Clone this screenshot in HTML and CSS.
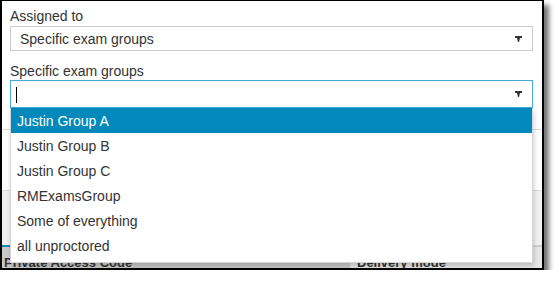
FILE: index.html
```html
<!DOCTYPE html>
<html>
<head>
<meta charset="utf-8">
<link rel="stylesheet" href="styles.css">
</head>
<body>
<div class="frame">
  <div class="form">
    <div class="field-label">Assigned to</div>
    <div class="select">
      <span class="select-text">Specific exam groups</span>
      <svg class="caret" width="7" height="6" viewBox="0 0 7 6"><polygon points="0,0 7,0 7,2 5,2 4,6 3,6 2,2 0,2" fill="#333"/></svg>
    </div>
    <div class="field-label second">Specific exam groups</div>
    <div class="combo">
      <div class="input">
        <span class="cursor"></span>
        <svg class="caret" width="7" height="6" viewBox="0 0 7 6"><polygon points="0,0 7,0 7,2 5,2 4,6 3,6 2,2 0,2" fill="#333"/></svg>
      </div>
      <ul class="menu">
        <li class="item active">Justin Group A</li>
        <li class="item">Justin Group B</li>
        <li class="item">Justin Group C</li>
        <li class="item">RMExamsGroup</li>
        <li class="item">Some of everything</li>
        <li class="item">all unproctored</li>
      </ul>
    </div>
  </div>
  <div class="row-white"></div>
  <div class="row-gray"></div>
  <div class="tabs">
    <div class="tab tab-left">Private Access Code</div>
    <div class="tab tab-right">Delivery mode</div>
  </div>
</div>
</body>
</html>
```
FILE: styles.css
```css
html, body {
  margin: 0;
  padding: 0;
  background: #fff;
}
body {
  font-family: "Liberation Sans", Arial, sans-serif;
  font-size: 14px;
  line-height: 16px;
  color: #333;
}
.frame {
  width: 540px;
  height: 267px;
  border-style: solid;
  border-color: #000;
  border-width: 1px 2px 2px 2px;
  box-shadow: 5px 5px 5px rgba(0, 0, 0, 0.55);
  overflow: hidden;
  background: #fff;
  display: flex;
  flex-direction: column;
}
.form {
  padding: 7px 9px 21px 8px;
  border-bottom: 1px solid #dcdcdc;
  flex: none;
}
.field-label {
  height: 16px;
  margin-bottom: 2px;
}
.field-label.second {
  margin-top: 12px;
  margin-bottom: 1px;
}
.select {
  height: 23px;
  border: 1px solid #cccccc;
  display: flex;
  align-items: center;
  justify-content: space-between;
  padding: 0 10px 0 9px;
}
.select-text {
  padding-top: 1px;
}
.combo {
  position: relative;
}
.input {
  height: 26px;
  border: 1px solid #45acd9;
  display: flex;
  align-items: center;
  justify-content: space-between;
  padding: 0 10px 0 5px;
}
.cursor {
  width: 1px;
  height: 16px;
  background: #000;
  margin-top: 1px;
}
.caret {
  display: block;
}
.menu {
  position: absolute;
  left: 0;
  right: 0;
  top: 28px;
  margin: 0;
  padding: 0 0 4px 0;
  list-style: none;
  background: #fff;
  border: 1px solid #d6d6d6;
  border-top: none;
  box-shadow: 1px 3px 5px rgba(0, 0, 0, 0.18);
  z-index: 2;
}
.item {
  height: 16px;
  padding: 5px 6px 4px 6px;
  color: #333;
}
.item.active {
  background: #0089ba;
  color: #fff;
}
.row-white {
  height: 60px;
  flex: none;
  border-bottom: 1px solid #dcdcdc;
}
.row-gray {
  height: 54px;
  flex: none;
  background: #f0f0f0;
}
.tabs {
  display: flex;
  flex: none;
  height: 40px;
}
.tab {
  font-weight: bold;
  font-size: 13px;
  line-height: 16px;
  color: #333;
  padding-top: 8px;
}
.tab-left {
  width: 346px;
  padding-left: 2px;
  background: #c9c9c9;
  border-top: 2px solid #0a87b8;
}
.tab-right {
  flex: 1;
  padding-left: 7px;
  background: #e6e6e6;
  border-top: 2px solid #cfcfcf;
}
```
